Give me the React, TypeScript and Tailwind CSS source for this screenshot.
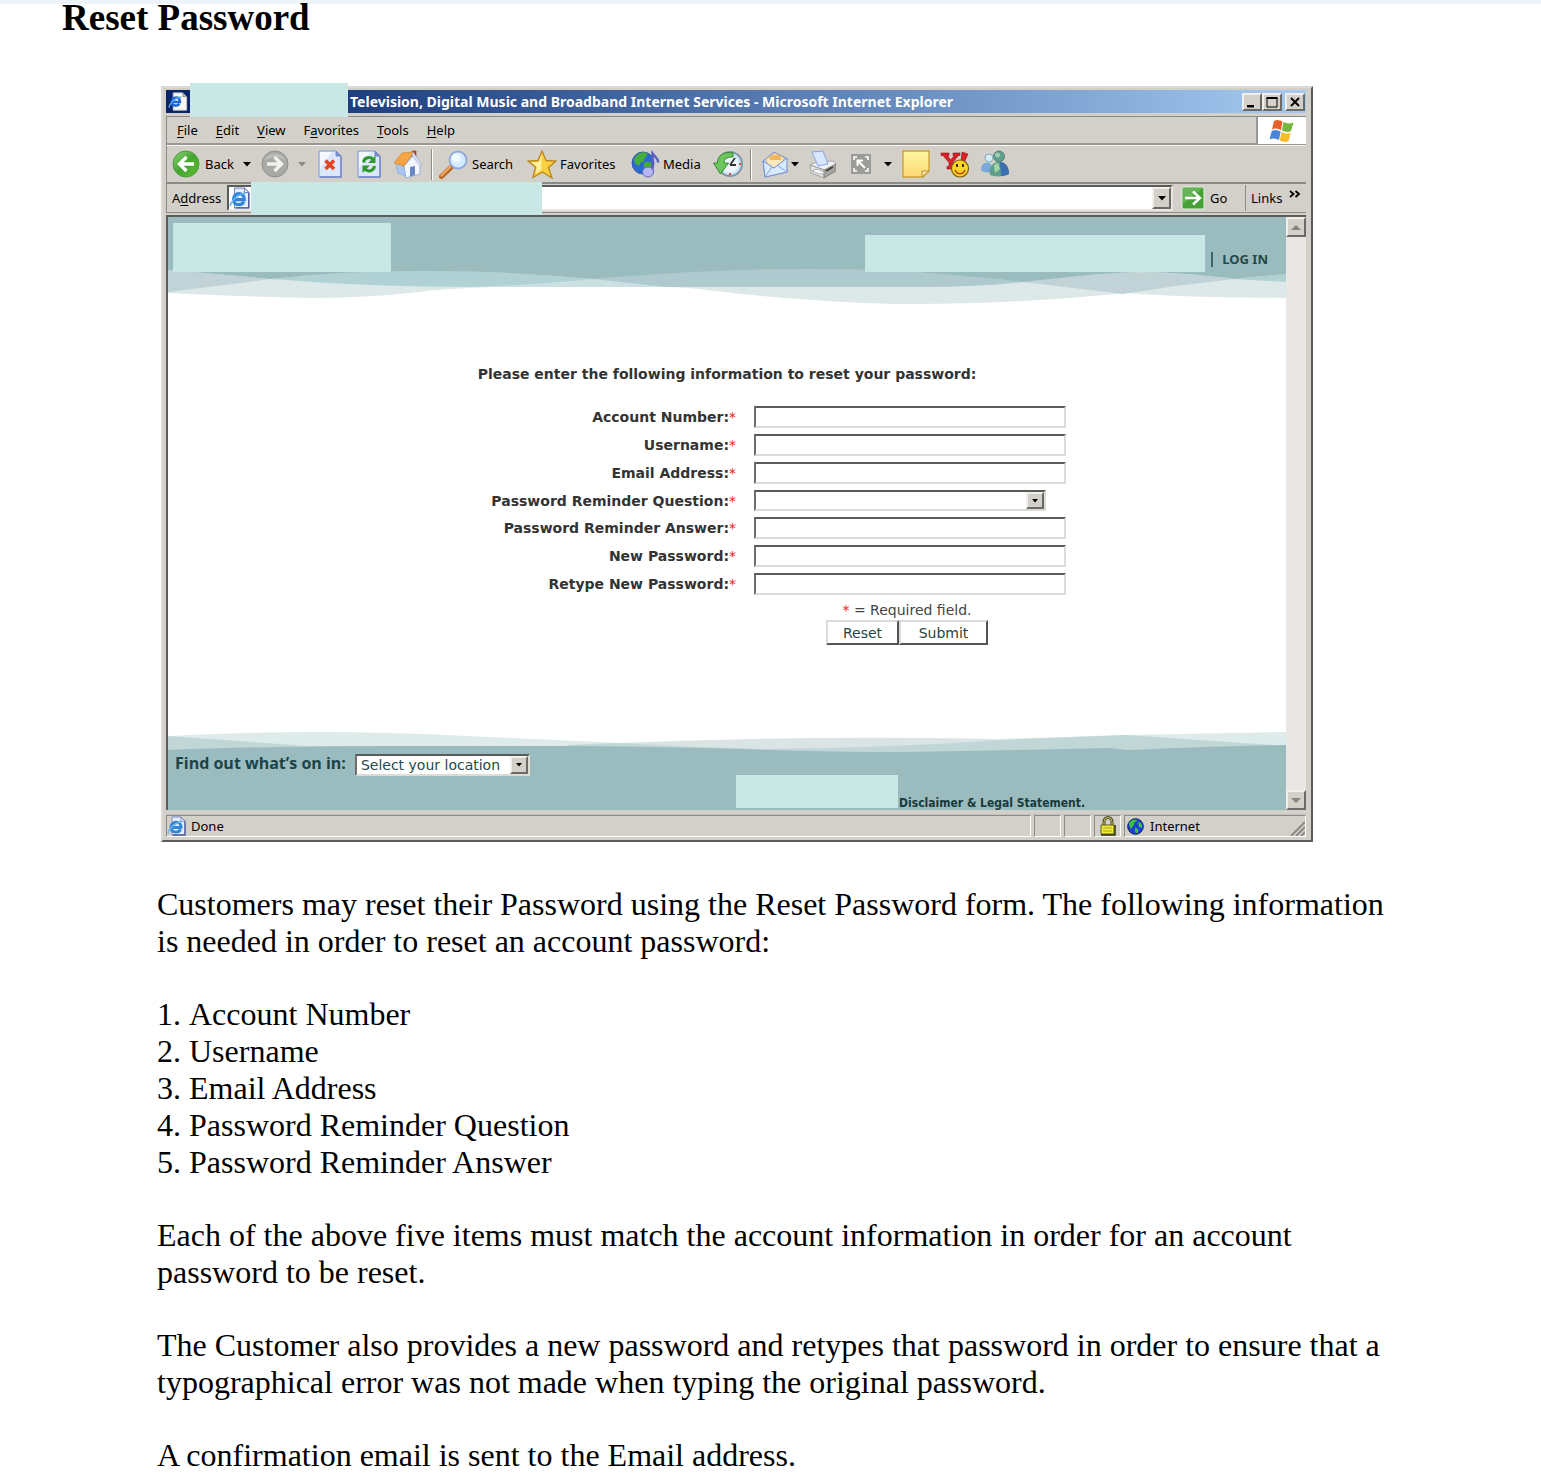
import type { ReactNode } from 'react';

const raised =
  'border-2 border-t-[#f1efea] border-l-[#f1efea] border-r-[#6a6a68] border-b-[#6a6a68] bg-[#d3d0c9]';

function Caret({ faded = false }: { faded?: boolean }) {
  return (
    <svg viewBox="0 0 8 5" className="h-[5px] w-2 shrink-0" aria-hidden="true">
      <path d="M0 0h8L4 4.6z" fill={faded ? '#8a8a86' : '#000'} />
    </svg>
  );
}

function PageIcon({ className }: { className: string }) {
  return (
    <svg viewBox="0 0 20 20" className={className} aria-hidden="true">
      <path d="M5 1h9l4 4v14H5z" fill="#e6edfc" stroke="#7d8bc4" />
      <path d="M14 1v4h4z" fill="#fff" stroke="#5f6fae" strokeWidth=".8" />
      <path d="M18 5.500v13.500H6" fill="none" stroke="#4f5a98" strokeWidth="1.300" />
      <path d="M4 11.500h10c.2-7.500-10-7-10-.2 0 5.700 7.500 6 9.600 2.200" fill="none" stroke="#2f86d6" strokeWidth="2.800" />
      <path d="M1.500 17.500C0 15 8 6 15.500 5.500" fill="none" stroke="#69b4ee" strokeWidth="1.500" />
    </svg>
  );
}

function TitleIcon() {
  return (
    <svg viewBox="0 0 24 24" className="h-[23px] w-6 shrink-0 bg-[#0a246a]" aria-hidden="true">
      <path d="M7 3h10l4 4v14H7z" fill="#f8f8f4" stroke="#c9c9c4" />
      <path d="M17 3v4h4z" fill="#b9bcc4" stroke="#777" strokeWidth=".6" />
      <path d="M5 12.500h9c.3-6.500-8-6-8.500-.1 0 4.600 6 5 8 2" fill="none" stroke="#1d66d8" strokeWidth="2.600" />
      <path d="M3 18.500C2 16 9 7 15.500 7.500" fill="none" stroke="#58a6f4" strokeWidth="1.500" />
    </svg>
  );
}

function BackIcon() {
  return (
    <svg viewBox="0 0 28 28" className="size-7 shrink-0" aria-hidden="true">
      <defs>
        <linearGradient id="backFill" x1="0" y1="0" x2="1" y2="1">
          <stop offset="0" stopColor="#8fd37a" />
          <stop offset=".5" stopColor="#43a62f" />
          <stop offset="1" stopColor="#5fbd33" />
        </linearGradient>
      </defs>
      <circle cx="14" cy="14" r="13" fill="url(#backFill)" stroke="#4d9a3c" />
      <path d="M22 14H8M14.500 7L7.500 14l7 7" fill="none" stroke="#fff" strokeWidth="3.400" />
    </svg>
  );
}

function ForwardIcon() {
  return (
    <svg viewBox="0 0 28 28" className="size-7 shrink-0" aria-hidden="true">
      <circle cx="14" cy="14" r="13" fill="#a9a9a6" stroke="#90908c" />
      <path d="M3 11a12 12 0 0 1 22 0c-6-5-16-5-22 0" fill="#bdbdba" />
      <path d="M6 14h14M13.500 7l7 7-7 7" fill="none" stroke="#f0f0ee" strokeWidth="3.400" />
    </svg>
  );
}

function SheetBase() {
  return (
    <>
      <path d="M1 1h17l5 5v21H1z" fill="#dbe7fd" stroke="#8095d6" />
      <path d="M2 2h12L2 18z" fill="#f4f8ff" />
      <path d="M18 1v5h5z" fill="#7f95d8" stroke="#6277bd" strokeWidth=".7" />
      <path d="M23 6v21H2" fill="none" stroke="#7286c6" strokeWidth="1.400" />
    </>
  );
}

function StopIcon() {
  return (
    <svg viewBox="0 0 24 28" className="h-7 w-6 shrink-0" aria-hidden="true">
      <SheetBase />
      <path d="M7.500 10.500l8.500 8.500M16 10.500l-8.500 8.500" stroke="#e8421c" strokeWidth="3.600" />
    </svg>
  );
}

function RefreshIcon() {
  return (
    <svg viewBox="0 0 24 28" className="h-7 w-6 shrink-0" aria-hidden="true">
      <SheetBase />
      <path d="M6.500 12.500c.5-5 6.500-6.500 9.500-3M17.500 16c-.5 5-6.500 6.500-9.500 3" fill="none" stroke="#2f9a2b" strokeWidth="3" />
      <path d="M18.500 5.500v7.500H11zM5.500 23v-7.500H13z" fill="#2f9a2b" />
    </svg>
  );
}

function HomeIcon() {
  return (
    <svg viewBox="0 0 30 29" className="h-[29px] w-[30px] shrink-0" aria-hidden="true">
      <path d="M19 1h4v7h-4z" fill="#c5402e" stroke="#8e2b20" strokeWidth=".6" />
      <path d="M3 14l6-1 5 14-9-4z" fill="#a9c6ee" stroke="#7f9fd2" strokeWidth=".6" />
      <path d="M11 16l9-10 7 9v9l-14 4z" fill="#f2f7ff" stroke="#89a4d4" strokeWidth=".8" />
      <path d="M17 17l5-1v9l-5 1.500z" fill="#6887c2" />
      <path d="M1 13L9 3l12-1L11 16z" fill="#f7a544" stroke="#d9822b" strokeWidth=".7" />
      <path d="M20 2l9 13-2 1-8-11z" fill="#dfe7f4" stroke="#8b9dc2" strokeWidth=".6" />
    </svg>
  );
}

function SearchIcon() {
  return (
    <svg viewBox="0 0 29 29" className="size-[29px] shrink-0" aria-hidden="true">
      <path d="M2.500 26.500L12 17.500" stroke="#b9692a" strokeWidth="5" strokeLinecap="round" />
      <path d="M2.500 25.500L11 17" stroke="#f3a35a" strokeWidth="2.400" strokeLinecap="round" />
      <circle cx="19" cy="10" r="8.500" fill="#d3ecff" stroke="#8fa9dc" strokeWidth="1.800" />
      <circle cx="17" cy="8" r="4.500" fill="#f2fbff" />
    </svg>
  );
}

function StarIcon() {
  return (
    <svg viewBox="0 0 30 29" className="h-[29px] w-[30px] shrink-0" aria-hidden="true">
      <path d="M15 1l4 9.500 10 .5-7.500 6.500L25 28l-9.500-6L6 27.500 8.500 17 1 11l10-.5z" fill="#fbcf3e" stroke="#b9851c" strokeWidth="1.300" />
      <path d="M14.500 4l-2.500 8-8 .2 6 4.600-1.500 7 6-4z" fill="#fff0a0" />
    </svg>
  );
}

function MediaIcon() {
  return (
    <svg viewBox="0 0 30 28" className="h-7 w-[30px] shrink-0" aria-hidden="true">
      <circle cx="12" cy="13" r="11" fill="#2c6ad0" stroke="#2a4c9c" strokeWidth=".8" />
      <path d="M3 9c3-6 9-8 13-6 1 4-3 4-3 7s-4 1-4 4-6 1-6-5zM14 12c4-1 7 0 7 3s-3 6-5 7-2-3-3-5 0-4 1-5z" fill="#46ad3b" />
      <path d="M21.500 22V3.500c2 3 6 4.500 5.500 9" fill="none" stroke="#5b5fc0" strokeWidth="2.400" />
      <ellipse cx="17" cy="22" rx="5.500" ry="5" fill="#b3b8f4" stroke="#6366bd" />
    </svg>
  );
}

function HistoryIcon() {
  return (
    <svg viewBox="0 0 30 28" className="h-7 w-[30px] shrink-0" aria-hidden="true">
      <circle cx="17" cy="14" r="12" fill="#cfe6f5" stroke="#8096a6" strokeWidth="2" />
      <circle cx="17" cy="14" r="8.500" fill="#eef8ff" />
      <path d="M17 15l5-7M17 15h6" stroke="#333" strokeWidth="1.800" />
      <path d="M17 23v2M26 14h2" stroke="#d8502a" strokeWidth="2" />
      <path d="M20 3C10 1 4.500 6 4.500 13H.5l7 11 8-11h-4.500c0-3 2-6 9-6z" fill="#6cc65c" stroke="#2f7f2c" strokeWidth=".9" />
    </svg>
  );
}

function MailIcon() {
  return (
    <svg viewBox="0 0 28 29" className="h-[29px] w-7 shrink-0" aria-hidden="true">
      <path d="M2 11L13 2l12 6 1 14-22 5z" fill="#b9d4fb" stroke="#7890d2" />
      <path d="M5 9l9-6 9 5-2 9-14 1z" fill="#fde8bd" stroke="#dba860" strokeWidth=".7" />
      <path d="M8 8c3-4 10-4 12-1v3H9z" fill="#f3b660" />
      <path d="M2 11l11 7L26 8v14L4 27z" fill="#d6ebff" stroke="#7890d2" />
      <path d="M4 27l7-10M26 22l-10-7" stroke="#8aa2de" />
    </svg>
  );
}

function PrinterIcon() {
  return (
    <svg viewBox="0 0 28 29" className="h-[29px] w-7 shrink-0" aria-hidden="true">
      <path d="M2 15l7-3 16-1 3 3-11 6z" fill="#f4f4f2" stroke="#999" strokeWidth=".8" />
      <path d="M4 2l11-1 5 13-10 2z" fill="#d6e7ff" stroke="#8ca4df" />
      <path d="M2 15l14 5v8L3 23z" fill="#e1e1df" stroke="#999" strokeWidth=".8" />
      <path d="M16 20l12-6v7l-12 7z" fill="#a5a5a3" stroke="#777" strokeWidth=".8" />
      <path d="M4 21l8 3 6-1-9-4z" fill="#fff" stroke="#888" strokeWidth=".6" />
      <path d="M18 21l7-4" stroke="#444" strokeWidth="2" />
    </svg>
  );
}

function ResizeIcon() {
  return (
    <svg viewBox="0 0 20 20" className="size-5 shrink-0" aria-hidden="true">
      <path d="M0 0h20v20H0z" fill="#9b9b98" />
      <path d="M3 6V3h3M14 3h3v3M17 14v3h-3M6 17H3v-3" fill="none" stroke="#fff" strokeWidth="1.600" />
      <path d="M14 14L7 7M6.500 12V6.500H12" fill="none" stroke="#fff" strokeWidth="2" />
    </svg>
  );
}

function NoteIcon() {
  return (
    <svg viewBox="0 0 28 28" className="size-7 shrink-0" aria-hidden="true">
      <defs>
        <linearGradient id="noteFill" x1="0" y1="0" x2="0" y2="1">
          <stop offset="0" stopColor="#fff7a0" />
          <stop offset="1" stopColor="#fbd775" />
        </linearGradient>
      </defs>
      <path d="M1 1h26v20l-6 6H1z" fill="url(#noteFill)" stroke="#cda23c" strokeWidth="1.400" />
      <path d="M20 27v-6h7z" fill="#ffeaa6" stroke="#c08d2c" />
    </svg>
  );
}

function MessengerIcon() {
  return (
    <svg viewBox="0 0 30 28" className="h-7 w-[30px] shrink-0" aria-hidden="true">
      <path d="M1 3h8v2.500H7.500l3 4.500 4-4.500H13V3h7v2.500h-1.500l-6 7v4h2V19H7v-2.500h2v-4L3 5.500H1z" fill="#dd1f26" stroke="#8e1216" strokeWidth=".6" />
      <path d="M22 2l6 2-4 9-3-1z" fill="#dd1f26" stroke="#8e1216" strokeWidth=".6" />
      <circle cx="20" cy="18.500" r="8.500" fill="#fcd626" stroke="#7b5d0d" strokeWidth="1.200" />
      <path d="M17 14v3M23 14v3" stroke="#222" strokeWidth="1.800" />
      <path d="M15 20c2 5 8 5 10 0" fill="none" stroke="#b3401c" strokeWidth="1.500" />
    </svg>
  );
}

function BuddiesIcon() {
  return (
    <svg viewBox="0 0 30 28" className="h-7 w-[30px] shrink-0" aria-hidden="true">
      <circle cx="9" cy="8" r="4" fill="#d4ecf2" stroke="#6f9fbc" strokeWidth=".8" />
      <path d="M1 20c0-7 5-8 9-7l4 8c-5 2-11 2-13-1z" fill="#7aa9da" />
      <path d="M10 25c-2-8 3-13 9-13s10 5 10 12c-5 3-15 3-19 1z" fill="#5fa08c" />
      <path d="M20 12c6 0 9 5 9 12-3 1.500-5 2-8 2z" fill="#3c6fb0" />
      <path d="M14 15l4-2 2 6-5 4z" fill="#a6d8a4" />
      <circle cx="19" cy="6.500" r="5.500" fill="#5f9f8b" stroke="#42776f" strokeWidth=".8" />
      <circle cx="17.500" cy="5" r="2.500" fill="#9bcfae" />
    </svg>
  );
}

function FlagIcon() {
  return (
    <svg viewBox="0 0 26 24" className="h-6 w-[26px]" aria-hidden="true">
      <path d="M5 2c3-2 6-1 8.500.5L12 11C9 9.500 6 9 3 10.500z" fill="#e8602c" />
      <path d="M14.500 3c3 1.500 6 2 10 .5L22 12c-3 1.500-6 1-9-.5z" fill="#77b63c" />
      <path d="M2.700 12c3-1.500 6-1 9 .5L10 21c-3-1.500-6-2-9.500-.5z" fill="#4a86d8" />
      <path d="M12.700 13c3 1.500 6 2 9 .5l-2 8.500c-3 1.500-6 1-9-.5z" fill="#f6bd2d" />
    </svg>
  );
}

function GoIcon() {
  return (
    <svg viewBox="0 0 24 24" className="size-6 shrink-0" aria-hidden="true">
      <rect x="1" y="1" width="22" height="22" rx="2" fill="#45a136" stroke="#e2f0dc" />
      <path d="M2 2h20L2 18z" fill="#63b455" />
      <path d="M4 12h14M12 5.500l7 6.500-7 6.500" fill="none" stroke="#fff" strokeWidth="2.400" />
    </svg>
  );
}

function LockIcon() {
  return (
    <svg viewBox="0 0 16 20" className="h-5 w-4" aria-hidden="true">
      <path d="M4 9V5.500a4 4 0 0 1 8 0V9" fill="none" stroke="#4a4a20" strokeWidth="3" />
      <path d="M4 9V5.500a4 4 0 0 1 8 0V9" fill="none" stroke="#c9c774" strokeWidth="1" />
      <path d="M1 9h13v9H1z" fill="#f2ec35" stroke="#5a5a16" />
      <path d="M15 9v10H1" fill="none" stroke="#2c2c10" strokeWidth="1.400" />
      <path d="M3 12h9M3 15h9" stroke="#a5a02a" />
    </svg>
  );
}

function GlobeIcon() {
  return (
    <svg viewBox="0 0 17 17" className="size-[17px] shrink-0" aria-hidden="true">
      <circle cx="8.500" cy="8.500" r="7.800" fill="#1c3fd6" stroke="#10205a" />
      <path d="M2 5c3-4 6-4 8-3 0 2-3 2-3 4s-2 2-2 4-3-1-3-5zM11 4c3 0 5 3 4 6l-3-1zM8 10c3 0 4 2 3 4s-4 1-3-4z" fill="#3fc23a" />
    </svg>
  );
}

function Tool({ label, icon, className }: { label: string; icon: ReactNode; className: string }) {
  return (
    <button type="button" aria-label={label} className={`flex shrink-0 items-center ${className}`}>
      {icon}
    </button>
  );
}

function Key({ before = '', k, after }: { before?: string; k: string; after: string }) {
  return (
    <>
      {before}
      <span className="underline underline-offset-2">{k}</span>
      {after}
    </>
  );
}

function TitleBar() {
  return (
    <div className="flex h-[23px] items-center bg-linear-to-r from-[#0a246a] to-[#a6caf0]">
      <TitleIcon />
      <div className="relative z-10 -mt-1 h-[34px] w-[158px] shrink-0 bg-[#c9e7e5]" />
      <span className="min-w-0 flex-1 truncate pl-0.5 text-sm leading-5 font-bold text-white">
        Television, Digital Music and Broadband Internet Services - Microsoft Internet Explorer
      </span>
      <div className="flex shrink-0 pr-px">
        <button type="button" aria-label="Minimize" className={`flex h-[18px] w-5 items-center justify-center ${raised}`}>
          <svg viewBox="0 0 12 12" className="size-3"><path d="M1 9h7v2.500H1z" /></svg>
        </button>
        <button type="button" aria-label="Maximize" className={`flex h-[18px] w-5 items-center justify-center ${raised}`}>
          <svg viewBox="0 0 12 12" className="size-3"><path d="M1 2h10v9H1z" fill="none" stroke="#000" /><path d="M.5 1h11v2H.5z" /></svg>
        </button>
        <button type="button" aria-label="Close" className={`ml-[3px] flex h-[18px] w-5 items-center justify-center ${raised}`}>
          <svg viewBox="0 0 12 12" className="size-3"><path d="M2 2l8 8M10 2l-8 8" stroke="#000" strokeWidth="2" /></svg>
        </button>
      </div>
    </div>
  );
}

function MenuBar() {
  return (
    <div className="mt-[3px] flex h-[29px] items-stretch border-t border-l border-[#8a8a86]">
      <nav className="flex flex-1 items-center gap-[18px] border-r-2 border-b-2 border-[#9a9894] pl-[10px]">
        <button type="button"><Key k="F" after="ile" /></button>
        <button type="button"><Key k="E" after="dit" /></button>
        <button type="button"><Key k="V" after="iew" /></button>
        <button type="button"><Key before="F" k="a" after="vorites" /></button>
        <button type="button"><Key k="T" after="ools" /></button>
        <button type="button"><Key k="H" after="elp" /></button>
      </nav>
      <div className="flex w-12 items-center justify-center border-b border-[#9a9894] bg-white">
        <FlagIcon />
      </div>
    </div>
  );
}

function Divider({ className }: { className: string }) {
  return <div className={`h-[31px] w-0.5 shrink-0 border-l border-[#8a8a86] bg-white ${className}`} />;
}

function Toolbar() {
  return (
    <div className="flex h-[39px] items-center border-t border-b-2 border-l border-t-[#f5f4f0] border-b-[#8a8a86] border-l-[#8a8a86] pl-[5px]">
      <button type="button" className="flex w-[62px] shrink-0 items-center gap-[5px]"><BackIcon />Back</button>
      <div className="ml-[9px]"><Caret /></div>
      <Tool label="Forward" icon={<ForwardIcon />} className="ml-[10px]" />
      <div className="ml-[9px]"><Caret faded /></div>
      <Tool label="Stop" icon={<StopIcon />} className="ml-[12px]" />
      <Tool label="Refresh" icon={<RefreshIcon />} className="ml-[15px]" />
      <Tool label="Home" icon={<HomeIcon />} className="ml-[12px]" />
      <Divider className="ml-[8px]" />
      <button type="button" className="ml-[6px] flex w-[88px] shrink-0 items-center gap-1"><SearchIcon />Search</button>
      <button type="button" className="flex w-[104px] shrink-0 items-center gap-[3px]"><StarIcon />Favorites</button>
      <button type="button" className="flex w-[84px] shrink-0 items-center gap-0.5"><MediaIcon />Media</button>
      <Tool label="History" icon={<HistoryIcon />} className="-ml-0.5" />
      <Divider className="ml-[7px]" />
      <Tool label="Mail" icon={<MailIcon />} className="ml-[9px]" />
      <div className="ml-0.5"><Caret /></div>
      <Tool label="Print" icon={<PrinterIcon />} className="ml-[9px]" />
      <Tool label="Full size" icon={<ResizeIcon />} className="ml-[15px]" />
      <div className="ml-[13px]"><Caret /></div>
      <Tool label="Note" icon={<NoteIcon />} className="ml-[10px]" />
      <Tool label="Yahoo Messenger" icon={<MessengerIcon />} className="ml-[10px]" />
      <Tool label="Messenger" icon={<BuddiesIcon />} className="ml-[10px]" />
    </div>
  );
}

function AddressBar() {
  return (
    <div className="flex h-[29px] items-center border-b border-l border-[#8a8a86] pl-[5px]">
      <label htmlFor="address" className="w-[55px] shrink-0"><Key before="A" k="d" after="dress" /></label>
      <div className="flex h-[26px] min-w-0 flex-1 items-center border-2 border-t-[#5a5a58] border-r-[#e8e6e0] border-b-[#e8e6e0] border-l-[#5a5a58] bg-white">
        <PageIcon className="size-[22px] shrink-0" />
        <div className="relative z-10 h-[33px] w-[291px] shrink-0 bg-[#c9e7e5]" />
        <input id="address" type="text" className="h-5 min-w-0 flex-1 bg-transparent px-1 outline-none" />
        <button type="button" aria-label="Show addresses" className={`flex h-[22px] w-[19px] items-center justify-center ${raised}`}>
          <Caret />
        </button>
      </div>
      <button type="button" className="ml-2 flex w-16 shrink-0 items-center gap-[5px]"><GoIcon />Go</button>
      <div className="flex h-[26px] w-[61px] shrink-0 items-center justify-between border-l border-[#8a8a86] px-[5px]">
        Links
        <svg viewBox="0 0 12 8" className="mb-2 h-2 w-3" aria-hidden="true">
          <path d="M1 1l3.500 3L1 7M6.500 1L10 4 6.500 7" fill="none" stroke="#000" strokeWidth="1.800" />
        </svg>
      </div>
    </div>
  );
}

function HeaderWaves() {
  return (
    <svg viewBox="0 0 1118 90" preserveAspectRatio="none" className="absolute inset-x-0 top-0 h-[90px] w-full" aria-hidden="true">
      <path d="M0 0H1118V81Q1000 80 961 76L901 81Q825 87 740 87Q680 87 572 77Q520 70 499 70H325Q270 72 251 75Q199 81 140 81Q60 79 0 76z" fill="#dde9e9" />
      <path d="M103 62Q240 45 425 62L499 70H306Q200 70 103 62z" fill="#b1d2d4" />
      <path d="M425 62Q362 68 306 70H499z" fill="#cbe0e2" />
      <path d="M425 62Q660 40 855 65Q810 70 758 70H499z" fill="#afcacf" />
      <path d="M0 53Q50 57 103 62Q50 69 0 75z" fill="#c2d3d7" />
      <path d="M855 65Q910 55 953 55Q1010 55 1066 62Q1010 68 955 77z" fill="#c2d3d7" />
      <path d="M1066 62L1118 57V65z" fill="#b1d2d4" />
      <path d="M0 0H1118V57L1066 62Q1010 55 970 55Q940 55 855 65Q743 52 641 52Q540 52 425 62Q325 53 251 54Q170 54 103 62Q50 57 0 53z" fill="#9bbcbf" />
    </svg>
  );
}

function FooterWaves() {
  return (
    <svg viewBox="0 0 1118 83" preserveAspectRatio="none" className="absolute inset-0 size-full" aria-hidden="true">
      <path d="M0 9Q80 5 151 5Q220 5 300 9L451 16Q520 15 572 14Q640 11 680 11Q760 12 828 12L958 8L1118 5V83H0z" fill="#deebeb" />
      <path d="M451 16Q640 8 828 12L740 22H572z" fill="#dbe4e5" />
      <path d="M0 9L140 19L0 24zM400 18L451 16Q520 20 600 22Q740 20 828 13L958 8L1118 19V40H400z" fill="#c1d6d6" />
      <path d="M0 23Q100 19 221 19H417Q500 20 572 22Q660 25 736 25Q860 23 939 21L961 23Q1050 19 1118 18V83H0z" fill="#9bbcbf" />
    </svg>
  );
}

const sunken = 'border-2 border-t-[#5a5a58] border-l-[#6e6e6c] border-r-[#dddbd6] border-b-[#dddbd6] bg-white';

function DropButton() {
  return (
    <span className={`pointer-events-none absolute inset-y-0.5 right-0.5 flex w-[18px] items-center justify-center ${raised}`}>
      <svg viewBox="0 0 6 4" className="h-1 w-1.5" aria-hidden="true"><path d="M0 0h6L3 3.500z" /></svg>
    </span>
  );
}

const fields = [
  { id: 'account', label: 'Account Number:', kind: 'text' },
  { id: 'username', label: 'Username:', kind: 'text' },
  { id: 'email', label: 'Email Address:', kind: 'email' },
  { id: 'question', label: 'Password Reminder Question:', kind: 'select' },
  { id: 'answer', label: 'Password Reminder Answer:', kind: 'text' },
  { id: 'new-password', label: 'New Password:', kind: 'password' },
  { id: 'retype-password', label: 'Retype New Password:', kind: 'password' },
];

function ResetForm() {
  return (
    <form className="flex flex-col pt-[47px] text-sm leading-5 text-[#333]" onSubmit={(e) => e.preventDefault()}>
      <p className="text-center font-bold">Please enter the following information to reset your password:</p>
      <div className="mt-[22px] flex flex-col gap-1.5 pl-9">
        {fields.map((f) => (
          <div key={f.id} className="grid grid-cols-2 items-center gap-[18px]">
            <label htmlFor={f.id} className="text-right font-bold">
              {f.label}
              <span className="font-normal text-[#f02020]">*</span>
            </label>
            {f.kind === 'select' ? (
              <div className="relative w-[292px]">
                <select id={f.id} className={`block h-[21px] w-full appearance-none ${sunken}`} />
                <DropButton />
              </div>
            ) : (
              <input id={f.id} type={f.kind} className={`block h-[22px] w-[312px] px-1 outline-none ${sunken}`} />
            )}
          </div>
        ))}
      </div>
      <div className="mt-[5px] grid grid-cols-2 gap-[18px] pl-9">
        <div className="col-start-2 flex w-[306px] flex-col items-center">
          <p className="text-[#444]"><span className="text-[#f02020]">*</span> = Required field.</p>
          <div className="flex text-[#1f4545]">
            <button type="reset" className="h-[25px] w-[73px] border-2 border-t-[#dddbd6] border-r-[#555] border-b-[#555] border-l-[#dddbd6] bg-white">Reset</button>
            <button type="submit" className="h-[25px] w-[89px] border-2 border-t-[#dddbd6] border-r-[#555] border-b-[#555] border-l-[#dddbd6] bg-white">Submit</button>
          </div>
        </div>
      </div>
    </form>
  );
}

function ScrollBar() {
  return (
    <div className="flex w-5 shrink-0 flex-col justify-between bg-[#e9e7e3]">
      <button type="button" aria-label="Scroll up" className={`flex h-5 w-5 items-center justify-center ${raised}`}>
        <svg viewBox="0 0 10 5" className="h-[5px] w-2.5"><path d="M0 5h10L5 0z" fill="#85857f" /></svg>
      </button>
      <button type="button" aria-label="Scroll down" className={`flex h-5 w-5 items-center justify-center ${raised}`}>
        <svg viewBox="0 0 10 5" className="h-[5px] w-2.5"><path d="M0 0h10L5 5z" fill="#85857f" /></svg>
      </button>
    </div>
  );
}

function WebPage() {
  return (
    <div className="mt-0.5 flex border-t-2 border-l-2 border-[#5c5c5a] font-['DejaVu_Sans',sans-serif]">
      <div className="min-w-0 flex-1 bg-white">
        <header className="relative h-[100px]">
          <HeaderWaves />
          <div className="relative flex h-[55px] items-end justify-between pr-[18px] pl-[5px]">
            <div className="h-[49px] w-[218px] bg-[#c9e7e5]" />
            <div className="flex items-end">
              <div className="h-[37px] w-[340px] bg-[#c9e7e5]" />
              <div className="flex items-center gap-[9px] pb-[3px] pl-1.5 font-['Noto_Sans',sans-serif] text-[13px] leading-5 font-bold text-[#24494b]">
                <span className="h-[15px] w-0.5 bg-[#3b6567]" />
                <a href="#login">LOG IN</a>
              </div>
            </div>
          </div>
        </header>
        <ResetForm />
        <footer className="relative mt-[82px] h-[83px]">
          <FooterWaves />
          <div className="relative flex items-center gap-[9px] pt-[27px] pl-[7px]">
            <label htmlFor="location" className="-mt-1 font-['Open_Sans',sans-serif] text-base leading-5 font-bold text-[#1c4347]">Find out what’s on in:</label>
            <div className="relative">
              <select id="location" className={`block h-[22px] w-[175px] appearance-none pr-5 pl-1 text-sm leading-[18px] text-[#24494b] ${sunken}`}>
                <option>Select your location</option>
              </select>
              <DropButton />
            </div>
          </div>
          <div className="relative mr-[201px] -mt-px flex items-end justify-end">
            <div className="h-[33px] w-[162px] bg-[#c9e7e5]" />
            <a href="#legal" className="pl-px font-['DejaVu_Sans_Condensed','DejaVu_Sans',sans-serif] text-xs leading-[9px] font-bold text-[#173a3c]">Disclaimer &amp; Legal Statement.</a>
          </div>
        </footer>
      </div>
      <ScrollBar />
    </div>
  );
}

function StatusBar() {
  const panel = 'flex h-[22px] items-center border border-t-[#8a8a86] border-l-[#8a8a86] border-r-white border-b-white';
  return (
    <div className="mt-1 flex gap-[3px] border-t border-[#c5c3bd]">
      <div className={`${panel} flex-1 gap-1`}><PageIcon className="size-5" />Done</div>
      <div className={`${panel} w-[27px]`} />
      <div className={`${panel} w-[27px]`} />
      <div className={`${panel} w-[27px] justify-center`}><LockIcon /></div>
      <div className={`${panel} w-[182px] pl-0.5`}>
        <GlobeIcon />
        <span className="flex-1 pl-1.5">Internet</span>
        <svg viewBox="0 0 16 16" className="mt-1 size-4" aria-hidden="true">
          <path d="M2 16L16 2M7 16l9-9M12 16l4-4" stroke="#8a8a86" strokeWidth="2" />
        </svg>
      </div>
    </div>
  );
}

function BrowserWindow() {
  return (
    <div className="w-full max-w-[1152px] border-2 border-t-[#dcdad4] border-r-[#5a5a58] border-b-[#5a5a58] border-l-[#dcdad4] bg-[#d3d0c9] pt-0.5 pr-[5px] pb-[3px] pl-[3px] font-['Noto_Sans',sans-serif] text-[13px] leading-5 text-black">
      <TitleBar />
      <MenuBar />
      <Toolbar />
      <AddressBar />
      <WebPage />
      <StatusBar />
    </div>
  );
}

export default function App() {
  return (
    <main className="min-h-screen bg-white font-['Liberation_Serif',serif] text-black">
      <div className="h-1 bg-[#edf2fb]" />
      <h1 className="pl-[62px] text-[37px] leading-7 font-bold">Reset Password</h1>
      <div className="mt-[54px] pr-[140px] pl-[157px] text-[32px] leading-[37px]">
        <div className="pl-1"><BrowserWindow /></div>
        <div className="mt-11 flex flex-col gap-9">
          <p>Customers may reset their Password using the Reset Password form. The following information is needed in order to reset an account password:</p>
          <ol className="list-inside list-decimal">
            <li>Account Number</li>
            <li>Username</li>
            <li>Email Address</li>
            <li>Password Reminder Question</li>
            <li>Password Reminder Answer</li>
          </ol>
          <p>Each of the above five items must match the account information in order for an account password to be reset.</p>
          <p>The Customer also provides a new password and retypes that password in order to ensure that a typographical error was not made when typing the original password.</p>
          <p>A confirmation email is sent to the Email address.</p>
        </div>
      </div>
    </main>
  );
}
